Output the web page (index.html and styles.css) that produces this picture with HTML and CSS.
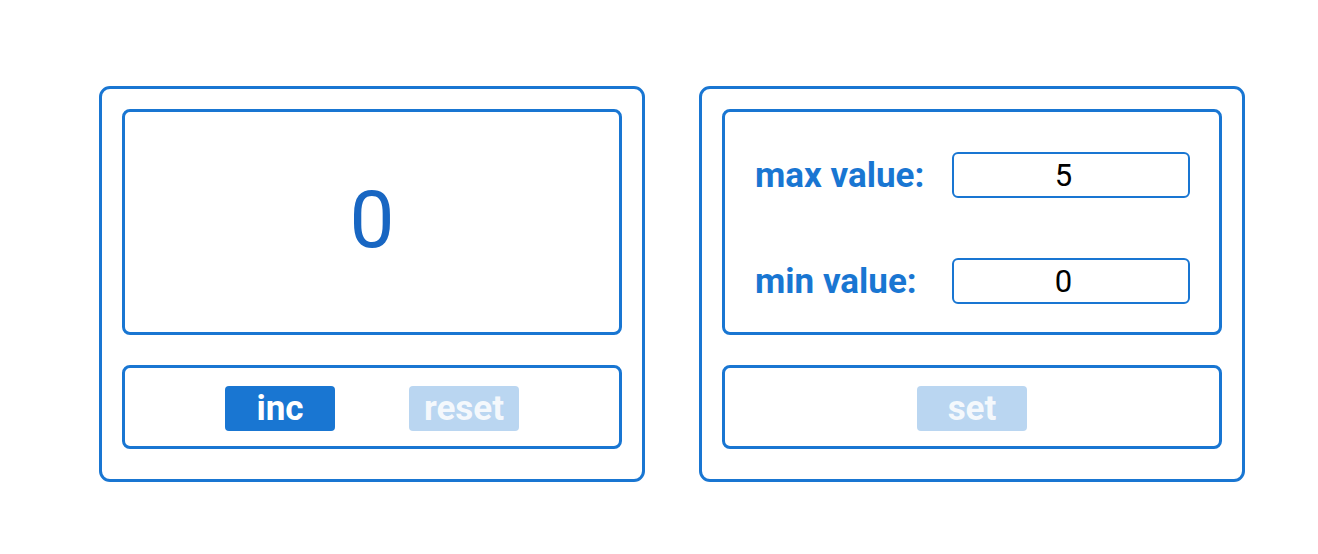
FILE: index.html
```html
<!DOCTYPE html>
<html>
<head>
<meta charset="utf-8">
<link rel="stylesheet" href="styles.css">
</head>
<body>
<div class="app">
  <div class="counter">
    <div class="panel display">
      <span class="value">0</span>
    </div>
    <div class="panel controls">
      <button class="btn">inc</button>
      <button class="btn disabled">reset</button>
    </div>
  </div>
  <div class="counter">
    <div class="panel settings">
      <div class="row">
        <span class="label">max value:</span>
        <input class="field" type="number" value="5">
      </div>
      <div class="row">
        <span class="label">min value:</span>
        <input class="field" type="number" value="0">
      </div>
    </div>
    <div class="panel controls">
      <button class="btn disabled">set</button>
    </div>
  </div>
</div>
</body>
</html>
```

FILE: styles.css
```css
* { box-sizing: border-box; }
body {
  margin: 0;
  background: #fff;
  font-family: Roboto, "Liberation Sans", sans-serif;
}
.app {
  display: flex;
  gap: 54px;
  padding: 86px 0 0 99px;
}
.counter {
  width: 546px;
  height: 396px;
  border: 3px solid #1976d2;
  border-radius: 11px;
  padding: 20px 20px 30px;
  display: flex;
  flex-direction: column;
  gap: 30px;
}
.panel {
  border: 3px solid #1976d2;
  border-radius: 8px;
}
.display, .settings {
  height: 226px;
}
.display {
  display: flex;
  align-items: center;
  justify-content: center;
}
.value {
  font-size: 80px;
  color: #1866c2;
  line-height: 1;
  margin-top: -4px;
}
.controls {
  height: 84px;
  display: flex;
  align-items: center;
  justify-content: center;
  gap: 74px;
  padding-top: 3px;
}
.btn {
  width: 110px;
  height: 45px;
  border: none;
  border-radius: 4px;
  background: #1976d2;
  color: #fff;
  font-family: Roboto, "Liberation Sans", sans-serif;
  font-weight: 700;
  font-size: 35px;
  line-height: 45px;
  padding: 0;
}
.btn.disabled {
  background: #bad6f1;
  color: rgba(255,255,255,0.85);
}
.settings {
  padding: 40px 29px 0 30px;
  display: flex;
  flex-direction: column;
  gap: 60px;
}
.row {
  display: flex;
  align-items: center;
  justify-content: space-between;
  height: 46px;
}
.label {
  color: #1976d2;
  font-weight: 700;
  font-size: 35px;
}
.field {
  width: 238px;
  height: 46px;
  border: 2px solid #1976d2;
  border-radius: 6px;
  text-align: center;
  font-family: Roboto, "Liberation Sans", sans-serif;
  font-size: 31px;
  color: #000;
  padding: 0 15px 0 0;
  outline: none;
  -moz-appearance: textfield;
}
.field::-webkit-outer-spin-button,
.field::-webkit-inner-spin-button {
  -webkit-appearance: none;
  margin: 0;
}
```
